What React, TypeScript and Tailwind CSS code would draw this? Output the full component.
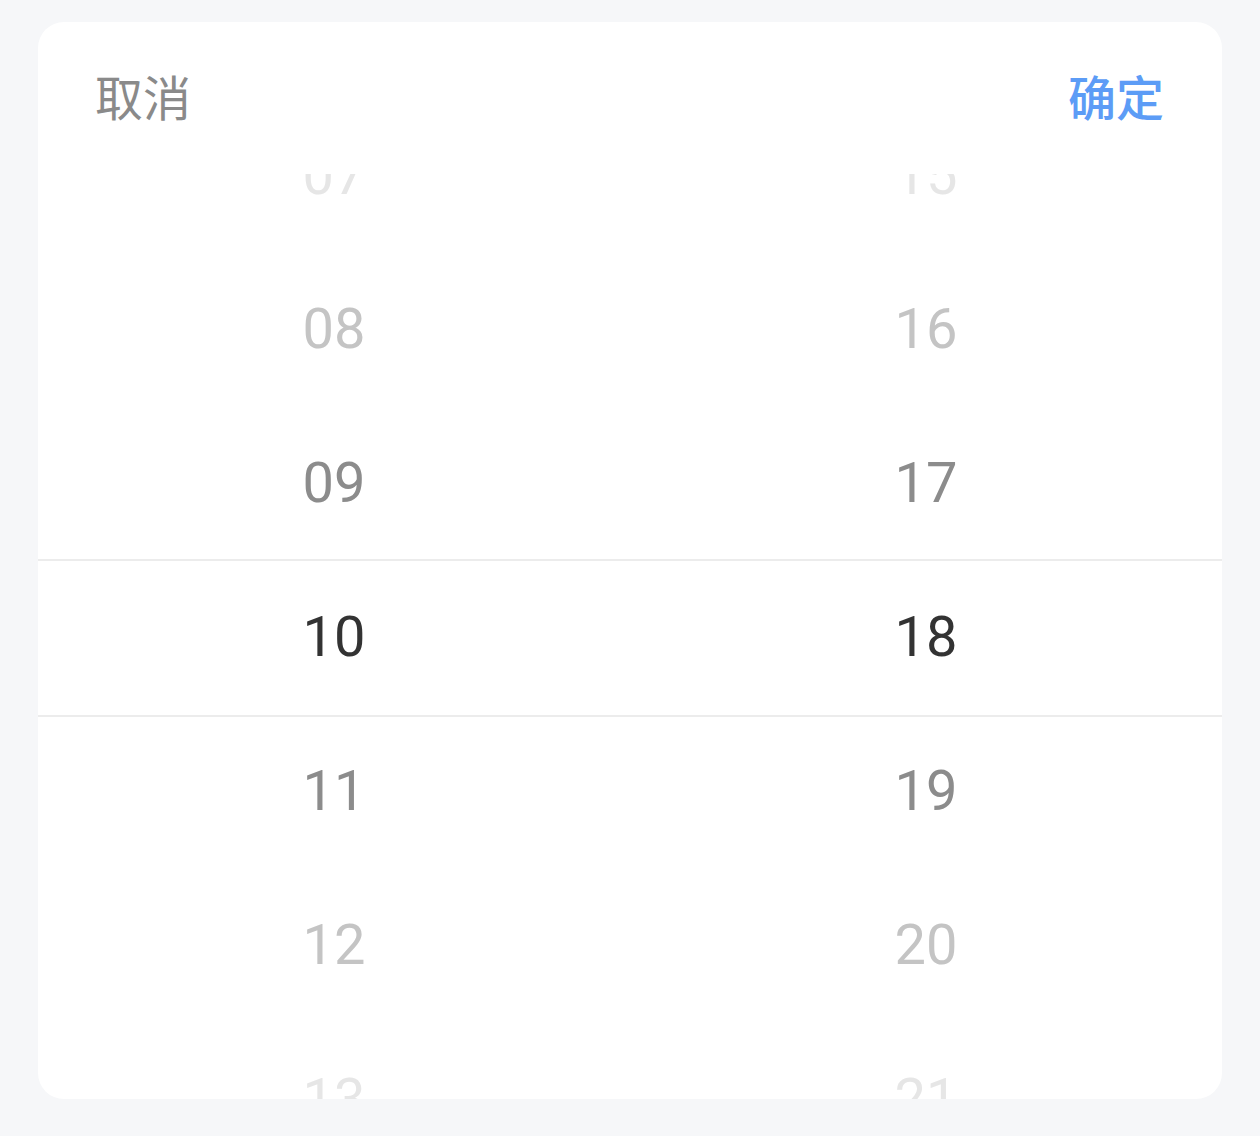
const left = ['07', '08', '09', '10', '11', '12', '13'];
const right = ['15', '16', '17', '18', '19', '20', '21'];

// colour by distance from the selected (middle) row
const shades = ['text-[#333333]', 'text-[#8c8c8c]', 'text-[#c4c4c4]', 'text-[#e6e6e6]'];

function Column({ items }: { items: string[] }) {
  return (
    <div className="flex flex-1 flex-col items-center">
      {items.map((v, i) => (
        <div
          key={v}
          className={`flex h-[154px] w-full shrink-0 items-center justify-center ${shades[Math.abs(i - 3)]}`}
        >
          {v}
        </div>
      ))}
    </div>
  );
}

export default function App() {
  return (
    <div className="min-h-[1136px] bg-[#f6f7f9] px-[38px] pt-[22px]">
      <div className="relative h-[1077px] overflow-hidden rounded-[26px] bg-white">
        {/* header */}
        <div
          className="flex h-[152px] items-center justify-between pb-[6px] pl-[57px] pr-[58px] text-[48px]"
          style={{ fontFamily: '"Noto Sans CJK SC", "Noto Sans", sans-serif' }}
        >
          <button className="text-[#8a8a8a]">取消</button>
          <button className="font-medium text-[#5c9cf6]">确定</button>
        </div>

        {/* picker */}
        <div className="relative h-[925px] overflow-hidden">
          <div className="pointer-events-none absolute inset-x-0 top-[385px] h-[158px] border-y-2 border-[#ececec]" />
          <div
            className="-mt-[76px] flex text-[56px] leading-none"
            style={{ fontFamily: 'Roboto, "Noto Sans", sans-serif' }}
          >
            <Column items={left} />
            <Column items={right} />
          </div>
        </div>
      </div>
    </div>
  );
}
